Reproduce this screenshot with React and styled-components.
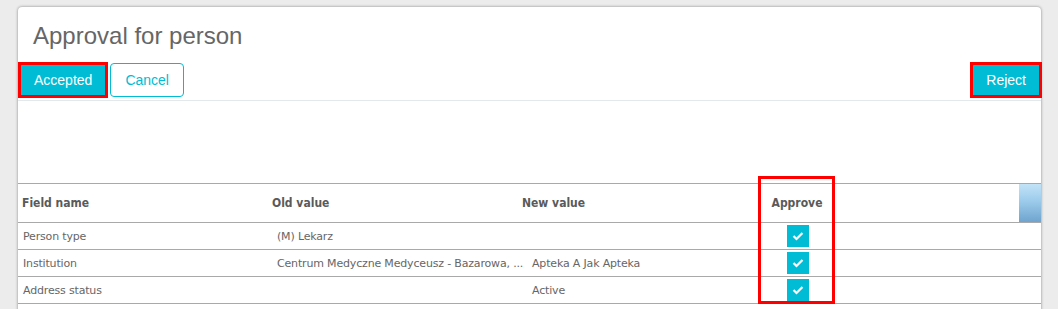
import React from 'react'
import styled, { createGlobalStyle } from 'styled-components'

const GlobalStyle = createGlobalStyle`
  body {
    margin: 0;
    padding: 7px 17px 0 18px;
    background: #ececec;
    overflow: hidden;
    font-family: 'Liberation Sans', Arial, sans-serif;
  }
`

const cyan = '#00bcd4'

const Panel = styled.div`
  width: 1023px;
  min-height: 340px;
  background: #fff;
  border-radius: 4px 4px 0 0;
  box-shadow: 0 0 3px rgba(0, 0, 0, 0.45);
`

const Title = styled.h1`
  margin: 0;
  padding: 15px 15px 0;
  font-family: 'Liberation Sans', Arial, sans-serif;
  font-weight: normal;
  font-size: 24px;
  line-height: 28px;
  color: #666;
`

const Toolbar = styled.div`
  display: flex;
  justify-content: space-between;
  align-items: center;
  margin-top: 13px;
  padding: 0 0 3px 1px;
  border-bottom: 1px solid #e3e8ec;
`

const ButtonGroup = styled.div`
  display: flex;
  gap: 3px;
`

// red annotation frame drawn round a button
const Mark = styled.span`
  display: inline-flex;
  outline: 3px solid #f00;
  outline-offset: -2px;
  position: relative;
  z-index: 1;
`

const Button = styled.button`
  height: 34px;
  padding: 0 14px;
  border: 1px solid ${cyan};
  border-radius: 4px;
  background: ${p => (p.$primary ? cyan : '#fff')};
  color: ${p => (p.$primary ? '#fff' : cyan)};
  font-family: 'Liberation Sans', Arial, sans-serif;
  font-size: 14px;
  cursor: pointer;
  ${Mark} & {
    position: relative;
    z-index: -1;
  }
`

const Spacer = styled.div`
  height: 82px;
`

const Grid = styled.div`
  position: relative;
  font-family: 'DejaVu Sans', Verdana, sans-serif;
`

const HeaderRow = styled.div`
  display: grid;
  grid-template-columns: 250px 250px 242px 74px 1fr 22px;
  height: 38px;
  border-top: 1px solid #a9a9a9;
  border-bottom: 1px solid #a9a9a9;
`

const HeadCell = styled.div`
  display: flex;
  align-items: center;
  justify-content: ${p => (p.$center ? 'center' : 'flex-start')};
  padding: 0 4px;
  font-family: 'DejaVu Sans Condensed', 'DejaVu Sans', sans-serif;
  font-stretch: condensed;
  font-weight: bold;
  font-size: 12px;
  color: #5a5a5a;
`

const ScrollCap = styled.div`
  background: linear-gradient(#c2e3f8, #9ccbeb 45%, #6fa4cf);
`

const Row = styled.div`
  display: grid;
  grid-template-columns: 255px 255px 232px 74px 1fr;
  height: 26px;
  border-bottom: 1px solid #a9a9a9;
`

const Cell = styled.div`
  display: flex;
  align-items: center;
  justify-content: ${p => (p.$center ? 'center' : 'flex-start')};
  padding: 0 2px 0 ${p => p.$indent || 4}px;
  font-size: 11px;
  letter-spacing: -0.17px;
  color: #666;
  white-space: nowrap;
  min-width: 0;
`

const Check = styled.span`
  display: flex;
  align-items: center;
  justify-content: center;
  width: 22px;
  height: 22px;
  background: ${cyan};
`

const Highlight = styled.div`
  position: absolute;
  left: 740px;
  top: -7px;
  width: 77px;
  height: 128px;
  box-sizing: border-box;
  border: 3px solid #f00;
  pointer-events: none;
`

const CheckBox = () => (
  <Check>
    <svg width="12" height="10" viewBox="0 0 12 10">
      <polyline points="1.5,5 4.5,8 10.5,2" fill="none" stroke="#fff" strokeWidth="2.2" />
    </svg>
  </Check>
)

const rows = [
  { field: 'Person type', old: '(M) Lekarz', next: '' },
  { field: 'Institution', old: 'Centrum Medyczne Medyceusz - Bazarowa, ...', next: 'Apteka A Jak Apteka' },
  { field: 'Address status', old: '', next: 'Active' },
]

const App = () => (
  <>
    <GlobalStyle />
    <Panel>
      <Title>Approval for person</Title>
      <Toolbar>
        <ButtonGroup>
          <Mark>
            <Button $primary>Accepted</Button>
          </Mark>
          <Button>Cancel</Button>
        </ButtonGroup>
        <Mark>
          <Button $primary>Reject</Button>
        </Mark>
      </Toolbar>
      <Spacer />
      <Grid>
        <HeaderRow>
          <HeadCell>Field name</HeadCell>
          <HeadCell>Old value</HeadCell>
          <HeadCell>New value</HeadCell>
          <HeadCell $center>Approve</HeadCell>
          <HeadCell />
          <ScrollCap />
        </HeaderRow>
        {rows.map(r => (
          <Row key={r.field}>
            <Cell $indent={5}>{r.field}</Cell>
            <Cell>{r.old}</Cell>
            <Cell>{r.next}</Cell>
            <Cell $center>
              <CheckBox />
            </Cell>
            <Cell />
          </Row>
        ))}
        <Highlight />
      </Grid>
    </Panel>
  </>
)

export default App
